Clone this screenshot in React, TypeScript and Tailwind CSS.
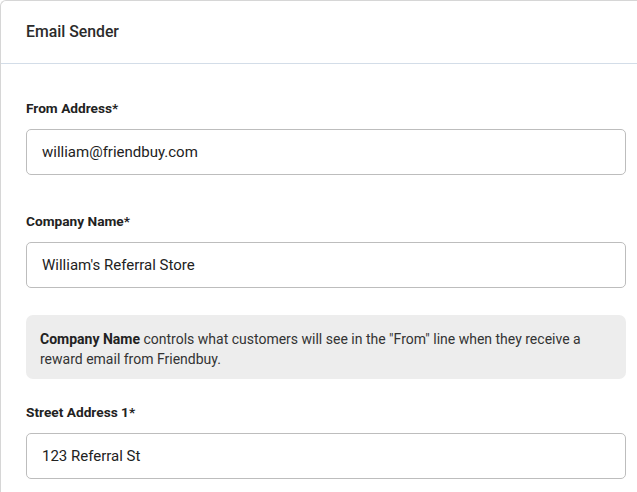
import React from "react";

function Field({ label, value, className = "" }: { label: string; value: string; className?: string }) {
  return (
    <div className={className}>
      <div className="h-5 text-[13.7px] leading-5 font-bold text-[#222]">{label}</div>
      <div className="mt-[11px] h-[46px] w-[600px] rounded-[5px] border border-[#bdbdbd] bg-white px-[15px] flex items-center text-[15px] text-[#222]">
        {value}
      </div>
    </div>
  );
}

export default function App() {
  return (
    <div className="w-[637px] h-[492px] overflow-hidden bg-white" style={{ fontFamily: "Roboto, 'Liberation Sans', sans-serif" }}>
      <div className="w-[660px] h-[520px] rounded-tl-[6px] border-l border-t border-[#d6d6d6] bg-white">
        <div className="h-[63px] border-b border-[#d3dde8] px-[25px] flex items-center text-[15.8px] font-medium text-[#2b2b2b]">
          Email Sender
        </div>
        <div className="pl-[25px] pt-[34px]">
          <Field label="From Address*" value="william@friendbuy.com" />
          <Field className="mt-[36px]" label="Company Name*" value="William's Referral Store" />
          <div className="mt-[27px] w-[600px] rounded-[7px] bg-[#ededed] pl-[14px] pr-[30px] pt-[14px] pb-[10px] text-[14px] leading-5 text-[#333]">
            <span className="font-bold text-[#222]">Company Name</span> controls what customers will see in the "From" line when they receive a reward email from Friendbuy.
          </div>
          <Field className="mt-[23px]" label="Street Address 1*" value="123 Referral St" />
        </div>
      </div>
    </div>
  );
}
